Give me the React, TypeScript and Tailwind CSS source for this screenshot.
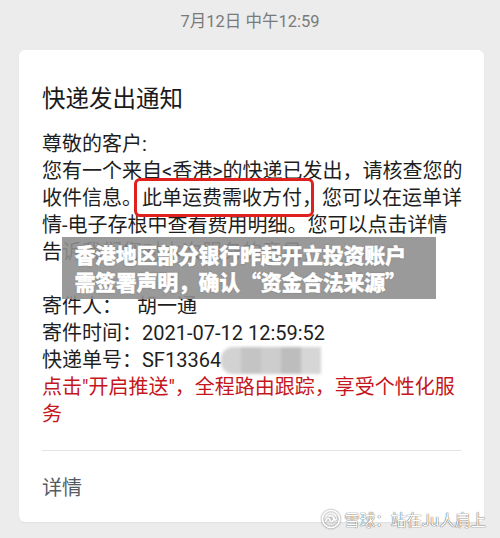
import React from 'react';

const font = "font-['Roboto','Noto_Sans_CJK_SC',sans-serif]";

const BlurredDigits = () => (
  <span className="inline-flex align-middle h-[27px] w-[100px] -mt-[3px] overflow-hidden rounded-l-[12px] blur-[1.5px]">
    <span className="flex-1 bg-[#d2d2d2]" />
    <span className="flex-1 bg-[#c4c4c4]" />
    <span className="flex-1 bg-[#cdcdcd]" />
    <span className="flex-1 bg-[#bdbdbd]" />
    <span className="flex-1 bg-[#d6d6d6]" />
  </span>
);

const XueqiuLogo = () => (
  <svg width="20" height="20" viewBox="0 0 20 20" className="drop-shadow-[0_0_1px_rgba(0,0,0,0.55)]">
    <circle cx="10" cy="10" r="8.5" fill="none" stroke="#fff" strokeWidth="1.6" />
    <path d="M4.5 12.5 C6 8.5, 8 8.5, 9 11 S12 13.5, 13 9" fill="none" stroke="#fff" strokeWidth="1.6" strokeLinecap="round" />
    <path d="M8 7.5 C9.5 6, 11.5 6.5, 12.5 9 S14.5 12, 15.5 9.5" fill="none" stroke="#fff" strokeWidth="1.6" strokeLinecap="round" />
  </svg>
);

export default function App() {
  return (
    <div className={`relative w-[500px] h-[538px] overflow-hidden bg-[#ececec] ${font}`}>
      {/* timestamp */}
      <div className="pt-[13px] h-[50px] text-center text-[16.5px] leading-[18px] text-[#7a7a7a]">
        7月12日 中午12:59
      </div>

      {/* message card */}
      <div className="ml-[19px] w-[465px] h-[472px] rounded-[6px] bg-white shadow-[0_1px_2px_rgba(0,0,0,0.05)] px-[23px] pt-[33px]">
        <div className="text-[23.5px] leading-[32px] text-[#1a1a1a]">快递发出通知</div>

        <div className="mt-[16px] text-[20px] leading-[27px] text-[#1e1e1e] whitespace-nowrap">
          <div>尊敬的客户:</div>
          <div>您有一个来自&lt;香港&gt;的快递已发出，请核查您的</div>
          <div>
            收件信息。
            <span className="relative">
              此单运费需收方付，
              <span className="absolute -left-[8px] right-[8px] -top-[8px] -bottom-[7px] rounded-[6px] border-[3px] border-[#e0201c]" />
            </span>
            您可以在运单详
          </div>
          <div>情-电子存根中查看费用明细。您可以点击详情</div>
          <div>告诉我们您对本次服务的意见，</div>
          <div>&nbsp;</div>
          <div>寄件人：&nbsp;&nbsp;&nbsp;胡一通</div>
          <div>寄件时间：2021-07-12 12:59:52</div>
          <div>
            快递单号：SF13364
            <BlurredDigits />
          </div>
          <div className="text-[#c4161c]">点击"开启推送"，全程路由跟踪，享受个性化服</div>
          <div className="text-[#c4161c]">务</div>
        </div>

        <div className="mt-[22px] h-px bg-[#e3e3e3]" />

        <div className="mt-[23px] text-[20px] leading-[28px] text-[#555b66]">详情</div>
      </div>

      {/* news caption over the picture */}
      <div className="absolute left-[62px] top-[237px] w-[374px] h-[62px] bg-[#8f8f8f]/90 pr-[18px] flex flex-col items-center justify-center text-white font-black text-[21px] leading-[27px] tracking-[-0.3px] [-webkit-text-stroke:0.4px_white] [text-shadow:0_0_2px_rgba(0,0,0,0.25)] font-['Noto_Sans_CJK_SC',sans-serif]">
        <div>香港地区部分银行昨起开立投资账户</div>
        <div>需签署声明，确认“资金合法来源”</div>
      </div>

      {/* watermark */}
      <div className="absolute right-[14px] bottom-[9px] flex items-center gap-[3px] text-white text-[15.5px] leading-[20px] [text-shadow:0_0_1px_rgba(0,0,0,0.6),0_0_1px_rgba(0,0,0,0.6)] font-['Noto_Sans_CJK_SC',sans-serif]">
        <XueqiuLogo />
        <span>雪球：站在Ju人肩上</span>
      </div>
    </div>
  );
}
